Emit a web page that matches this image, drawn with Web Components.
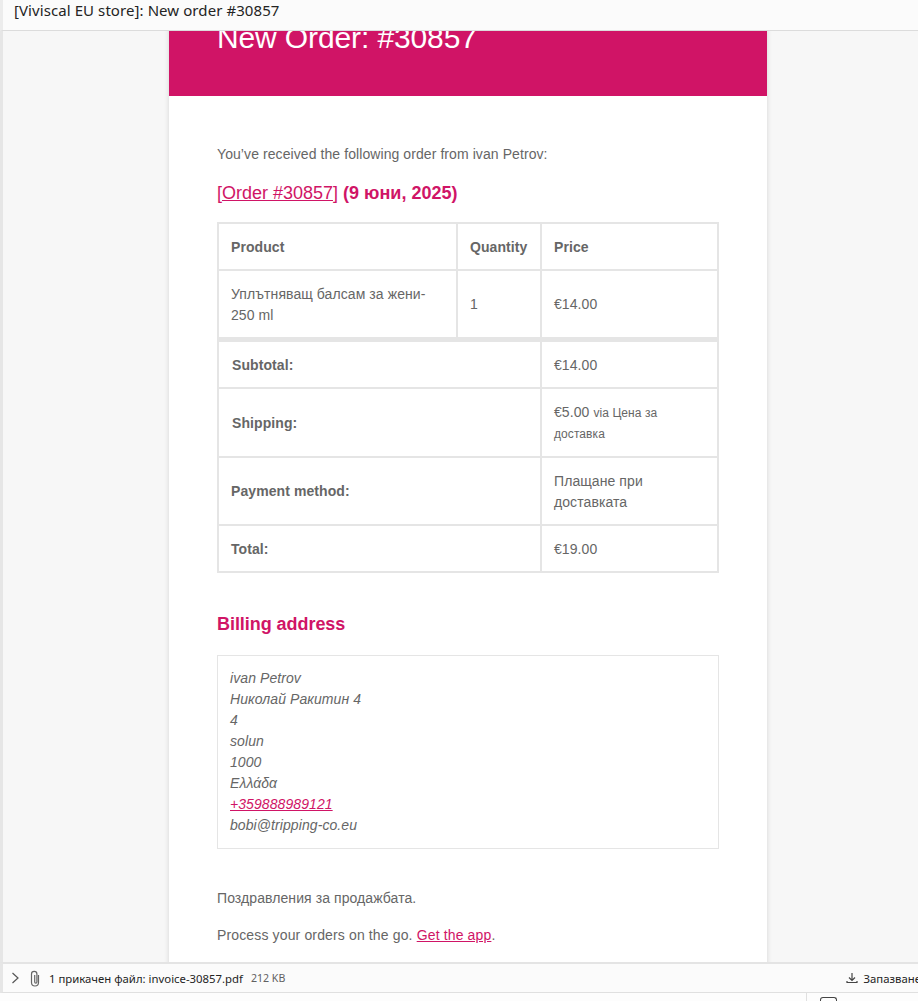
<!DOCTYPE html>
<html lang="bg"><head><meta charset="utf-8"><title>New order</title>
<style>html,body{margin:0;height:100%;overflow:hidden}body{font-family:"Liberation Sans",Arial,sans-serif}email-body a{color:#d01466}email-body p:last-child{letter-spacing:.14px}</style>
</head><body>
<mail-window>
<span slot="subject">[Viviscal EU store]: New order #30857</span>
<order-email>
  <email-header>New Order: #30857</email-header>
  <email-body>
    <p>You’ve received the following order from ivan Petrov:</p>
    <order-table></order-table>
    <billing-address></billing-address>
    <p class="c">Поздравления за продажбата.</p>
    <p>Process your orders on the go. <a href="#">Get the app</a>.</p>
  </email-body>
</order-email>
<attachment-bar slot="attach"></attachment-bar>
</mail-window>
<script>
function def(name, css, html){
  customElements.define(name, class extends HTMLElement{
    constructor(){super();this.attachShadow({mode:'open'}).innerHTML='<style>'+css+'</style>'+html;}
  });
}
def('mail-window',`
:host{display:grid;grid-template-rows:31px 931px 31px 8px;height:1001px;width:918px;overflow:hidden;background:#fdfdfd}
.sub{background:#fbfbfb;border-bottom:1px solid #dcdcdc;border-left:3px solid #ececec;font:15px "Noto Sans",sans-serif;letter-spacing:.08px;color:#242424;padding:0 11px;line-height:21px;overflow:hidden;white-space:nowrap;box-sizing:border-box}
.pane{background:#f7f7f7;border-left:3px solid #e6e6e6;overflow:hidden;min-height:0}
.foot{display:flex;align-items:flex-start;overflow:hidden}
.foot i{margin-left:806px;width:1px;height:8px;background:#e0e0e0}
.foot b{margin-left:13px;width:15px;height:6px;border:1.5px solid #444;border-bottom:0;border-radius:3px 3px 0 0;margin-top:4px}
`,`<div class="sub"><slot name="subject"></slot></div><div class="pane"><slot></slot></div><slot name="attach"></slot><div class="foot"><i></i><b></b></div>`);

def('order-email',`
:host{display:block;width:598px;margin:-52px 0 0 166px;background:#fff;box-shadow:0 1px 4px 1px rgba(0,0,0,.1);color:#666;font:14px/21px "Liberation Sans",Arial,sans-serif;letter-spacing:.08px}
`,`<slot></slot>`);

def('email-header',`
:host{display:block;background:#d01466;color:#fff;padding:36px 48px;font-size:30px;line-height:45px;font-weight:400;letter-spacing:-.12px}
`,`<slot></slot>`);

def('email-body',`
:host{display:block;padding:48px 48px 60px}
::slotted(p){margin:0 0 16px}
::slotted(p.c){margin-top:39.5px}
`,`<slot></slot>`);

def('order-table',`
:host{display:block;padding-top:1px}
h2{margin:0 0 16.6px;font-size:18px;line-height:23.4px;font-weight:700;color:#d01466;letter-spacing:0}
h2 a{color:#d01466;font-weight:400}
.t{display:grid;grid-template-columns:237px 82px 175px;grid-template-rows:45px 66px 48px 67px 66px 45px;gap:2px;background:#e5e5e5;border:2px solid #e5e5e5;width:498px}
.t>div{background:#fff;padding:2px 12px 0;display:flex;align-items:center;min-width:0}
.t>div.z{padding-top:0}
.t>div.s2{grid-column:span 2}
.t>.r0{margin-top:3px}
.t>.l{font-weight:700}
.t>.i{padding-left:13px}
.t>.r1{margin-top:3px}
b{font-weight:700}
small{font-size:12px;line-height:1}
`,`<h2><a href="#">[Order #30857]</a> (9 юни, 2025)</h2>
<div class="t">
<div><b>Product</b></div><div><b>Quantity</b></div><div><b>Price</b></div>
<div><span>Уплътняващ балсам за жени- 250 ml</span></div><div class="z">1</div><div class="z">€14.00</div>
<div class="s2 r0 l i">Subtotal:</div><div class="r1">€14.00</div>
<div class="s2 l i">Shipping:</div><div class="z"><span>€5.00 <small>via Цена за</small><br><small>доставка</small></span></div>
<div class="s2 l z">Payment method:</div><div><span>Плащане при доставката</span></div>
<div class="s2 l">Total:</div><div>€19.00</div>
</div>`);

def('billing-address',`
:host{display:block;margin-top:40.4px}
h2{margin:0 0 18px;font-size:18px;line-height:23.4px;font-weight:700;color:#d01466;letter-spacing:-.05px}
address{border:1px solid #e5e5e5;padding:12px;font-style:italic;width:476px}
a{color:#d01466}
`,`<h2>Billing address</h2><address>ivan Petrov<br>Николай Ракитин 4<br>4<br>solun<br>1000<br>Ελλάδα<br><a href="#">+359888989121</a><br>bobi@tripping-co.eu</address>`);

def('attachment-bar',`
:host{display:flex;align-items:center;box-sizing:border-box;height:31px;background:#fbfbfb;border-top:2px solid #e4e4e4;border-bottom:1px solid #e0e0e0;border-left:3px solid #e6e6e6;font:11.35px "Noto Sans",sans-serif;color:#242424;white-space:nowrap;overflow:hidden}
.ch{margin-left:8px;width:9px;height:12px}
.cl{margin-left:9px;width:12px;height:17px}
.n{margin-left:8px}
.k{margin-left:8px;color:#616161;font-size:10.6px}
.sv{margin-left:auto;display:flex;align-items:center;gap:6px;margin-right:-3px}
.sv svg{width:12px;height:12px}
`,`<svg class="ch" viewBox="0 0 9 12" fill="none" stroke="#555" stroke-width="1.2"><path d="M1.5 1 7 6 1.500 11"/></svg>
<svg class="cl" viewBox="0 0 12 17" fill="none" stroke="#666" stroke-width="1.2"><path d="M9.500 5v7.500a3.500 3.500 0 0 1-7 0V4a2.700 2.700 0 0 1 5.400 0v8a1.100 1.100 0 0 1-2.200 0V5"/></svg>
<span class="n">1 прикачен файл: invoice-30857.pdf</span><span class="k">212 KB</span>
<span class="sv"><svg viewBox="0 0 12 12" fill="none" stroke="#444" stroke-width="1.2"><path d="M6 1v7M3 5.500l3 3 3-3M1 9v1.500h10V9"/></svg>Запазване</span>`);
</script>
</body></html>
